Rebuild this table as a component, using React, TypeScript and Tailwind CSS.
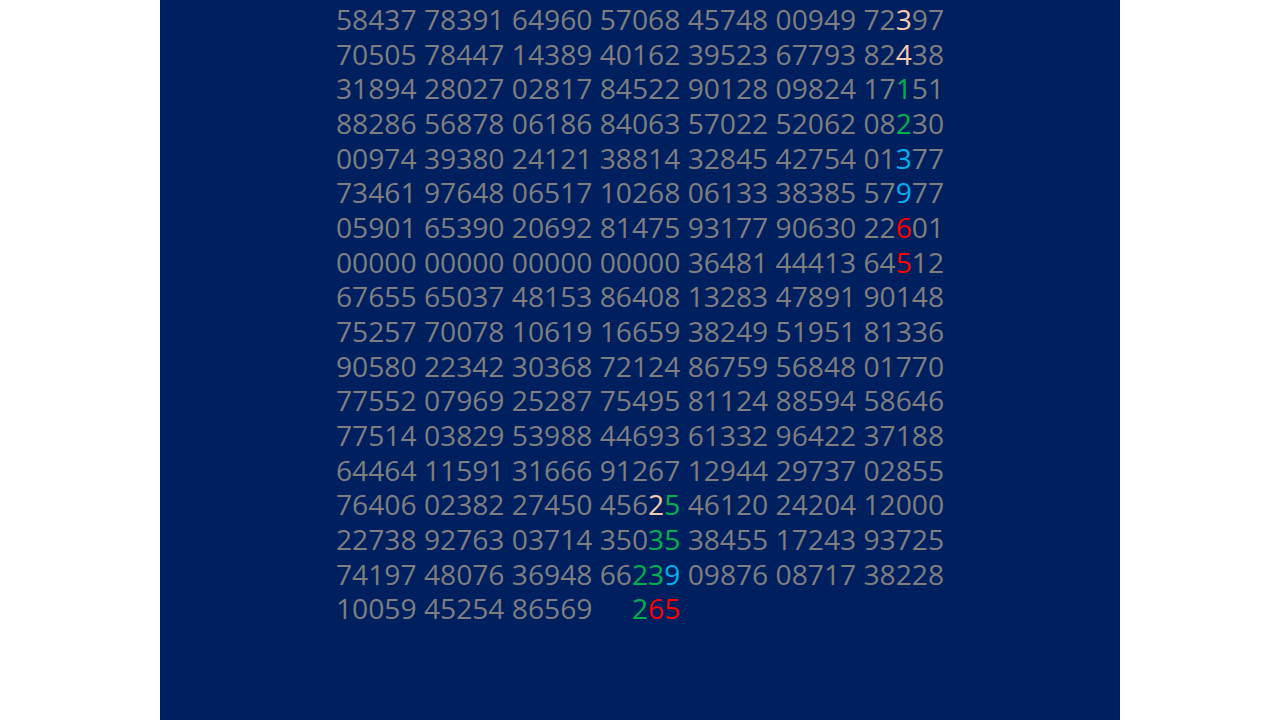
import React from 'react';

// rows of the number block; [x9] marks a coloured digit run
const rows = [
  '58437 78391 64960 57068 45748 00949 72[p3]97',
  '70505 78447 14389 40162 39523 67793 82[p4]38',
  '31894 28027 02817 84522 90128 09824 17[g1]51',
  '88286 56878 06186 84063 57022 52062 08[g2]30',
  '00974 39380 24121 38814 32845 42754 01[b3]77',
  '73461 97648 06517 10268 06133 38385 57[b9]77',
  '05901 65390 20692 81475 93177 90630 22[r6]01',
  '00000 00000 00000 00000 36481 44413 64[r5]12',
  '67655 65037 48153 86408 13283 47891 90148',
  '75257 70078 10619 16659 38249 51951 81336',
  '90580 22342 30368 72124 86759 56848 01770',
  '77552 07969 25287 75495 81124 88594 58646',
  '77514 03829 53988 44693 61332 96422 37188',
  '64464 11591 31666 91267 12944 29737 02855',
  '76406 02382 27450 456[p2][g5] 46120 24204 12000',
  '22738 92763 03714 350[g35] 38455 17243 93725',
  '74197 48076 36948 66[g23][b9] 09876 08717 38228',
  '10059 45254 86569 [x00][g2][r65]',
];

const colors: Record<string, string> = {
  p: 'text-[#f8cbad]',
  g: 'text-[#00b050]',
  b: 'text-[#00b0f0]',
  r: 'text-[#ff0000]',
  x: 'text-transparent',
};

const Row = ({ line }: { line: string }) => {
  const parts = line.split(/(\[[pgbrx]\d+\])/).filter(Boolean);
  return (
    <div className="whitespace-pre">
      {parts.map((p, i) => {
        const m = p.match(/^\[([pgbrx])(\d+)\]$/);
        if (m) {
          return (
            <span key={i} className={colors[m[1]]}>
              {m[2]}
            </span>
          );
        }
        return <span key={i}>{p}</span>;
      })}
    </div>
  );
};

export default function App() {
  return (
    <div className="w-full h-screen bg-white">
      <div className="mx-auto w-[960px] h-full bg-[#001f5f] pl-[176px] pt-[2px] overflow-hidden">
        <div
          className="text-[28.2px] leading-[34.65px] text-[#7f7f7f]"
          style={{ fontFamily: '"Open Sans", sans-serif' }}
        >
          {rows.map((r, i) => (
            <Row key={i} line={r} />
          ))}
        </div>
      </div>
    </div>
  );
}
